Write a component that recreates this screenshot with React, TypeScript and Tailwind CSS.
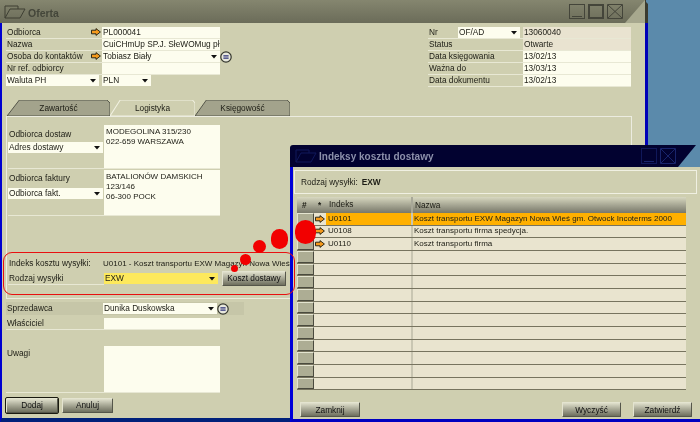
import React from "react";

const Arrow = () => (
  <svg width="10" height="8" viewBox="0 0 10 8" className="shrink-0">
    <path d="M0.5 2.2H5V0.6L9.4 4L5 7.4V5.8H0.5Z" fill="#f59a1c" stroke="#1a1a10" strokeWidth="0.9" />
  </svg>
);

const Caret = () => (
  <svg width="6" height="4" viewBox="0 0 6 4" className="shrink-0">
    <path d="M0 0H6L3 3.5Z" fill="#111" />
  </svg>
);

const Circle = () => (
  <svg width="12" height="12" viewBox="0 0 12 12" className="shrink-0">
    <circle cx="6" cy="6" r="5.2" fill="#e8e8dc" stroke="#33352c" strokeWidth="1.2" />
    <path d="M3.4 4.8H8.6M3.4 7.2H8.6" stroke="#2a2f78" strokeWidth="1.3" />
  </svg>
);

const Row = ({ label, children, icon }: { label: string; children?: React.ReactNode; icon?: boolean }) => (
  <div className="flex h-[12px] w-[214px] border-b border-[#e8e8d4]">
    <div className="relative flex w-[96px] shrink-0 items-center whitespace-nowrap pl-[1px] leading-none">
      {label}
      {icon && (
        <span className="absolute right-[1px] top-[1px]">
          <Arrow />
        </span>
      )}
    </div>
    {children}
  </div>
);

const Field = ({ children, className = "" }: { children?: React.ReactNode; className?: string }) => (
  <div className={`flex h-[11px] flex-1 items-center overflow-hidden whitespace-nowrap bg-[#fdfdee] pl-[1px] leading-none ${className}`}>
    {children}
  </div>
);

const Select = ({ text, className = "" }: { text: string; className?: string }) => (
  <div className={`flex h-[11px] items-center justify-between whitespace-nowrap bg-[#fdfdee] pl-[1px] pr-[3px] leading-none ${className}`}>
    <span>{text}</span>
    <Caret />
  </div>
);

const Btn = ({ text, className = "" }: { text: string; className?: string }) => (
  <div className={`flex h-[15px] items-center justify-center rounded-[1px] border border-[#55564a] border-t-[#e4e4d0] border-l-[#e4e4d0] bg-gradient-to-b from-[#e0e0cc] to-[#6e6f5e] leading-none text-[#111] ${className}`}>
    {text}
  </div>
);

const Tab = ({ text, active, className = "" }: { text: string; active?: boolean; className?: string }) => (
  <div className={`relative flex h-[16px] items-center justify-center leading-none ${className}`}>
    <svg className="absolute inset-0 h-full w-full" viewBox="0 0 100 16" preserveAspectRatio="none">
      <path
        d="M0 16L12 0H97L100 3V16Z"
        fill={active ? "#cfcfb0" : "#a3a38c"}
        stroke={active ? "#f2f2e2" : "#55564a"}
        strokeWidth="1"
        vectorEffect="non-scaling-stroke"
      />
    </svg>
    <span className="relative">{text}</span>
  </div>
);

const Folder = ({ color }: { color: string }) => (
  <svg width="22" height="14" viewBox="0 0 22 14" className="shrink-0">
    <path d="M1 1H14V4M1 1V13H16L21 4H6L1 13" fill="none" stroke={color} strokeWidth="1" />
  </svg>
);

const rows = [
  { id: "U0101", name: "Koszt transportu EXW Magazyn Nowa Wieś gm. Otwock Incoterms 2000" },
  { id: "U0108", name: "Koszt transportu firma spedycja." },
  { id: "U0110", name: "Koszt transportu firma" },
  ...Array.from({ length: 11 }, () => ({ id: "", name: "" })),
];

export default function App() {
  return (
    <div className="relative h-[422px] w-[700px] overflow-hidden bg-[#5b8aab] font-['Liberation_Sans',sans-serif] text-[8.3px] text-[#1c1c14] blur-[0.3px]">
      {/* main window */}
      <div className="absolute left-0 top-0 flex h-[422px] w-[648px] flex-col">
        <div className="relative flex h-[23px] shrink-0 items-center bg-gradient-to-b from-[#85866f] to-[#6b6c59] pl-[4px]">
          <Folder color="#3e3f33" />
          <span className="ml-[2px] mt-[3px] text-[10.5px] font-bold leading-none text-[#44463a]">Oferta</span>
          <div className="ml-auto mr-[25px] flex gap-[3px]">
            <div className="flex h-[15px] w-[16px] items-end justify-center border border-[#44453a] pb-[1px]">
              <div className="h-[1px] w-[10px] bg-[#44453a]" />
            </div>
            <div className="h-[15px] w-[16px] border-2 border-[#44453a]" />
            <svg width="16" height="15" viewBox="0 0 16 15">
              <path d="M.5.5H15.5V14.5H.5ZM1 1L15 14M15 1L1 14" fill="none" stroke="#44453a" />
            </svg>
          </div>
          <svg className="absolute right-0 top-0" width="23" height="23" viewBox="0 0 23 23">
            <path d="M0 23L20 0H23V23Z" fill="#a7a88e" />
            <path d="M20 0H23V23H20Z" fill="#3a3b30" />
            <path d="M21 0H23V4L21 2Z" fill="#5b8aab" />
          </svg>
        </div>
        <div className="flex-1 border-b-4 border-l-2 border-r-[3px] border-b-[#00207a] border-l-[#0000d0] border-r-[#0000b8] bg-[#cfcfb0] pt-[4px]">
          <div className="flex justify-between pl-[4px] pr-[14px]">
            <div className="w-[240px]">
              <Row label="Odbiorca" icon>
                <Field>PL000041</Field>
              </Row>
              <Row label="Nazwa">
                <Field>CuiCHmUp SP.J. SłeWOMug pł</Field>
              </Row>
              <div className="flex items-center">
                <Row label="Osoba do kontaktów" icon>
                  <Select text="Tobiasz Biały" className="flex-1" />
                </Row>
                <Circle />
              </div>
              <Row label="Nr ref. odbiorcy">
                <Field />
              </Row>
              <div className="flex gap-[3px]">
                <Select text="Waluta PH" className="w-[93px]" />
                <Select text="PLN" className="w-[49px]" />
              </div>
            </div>
            <div className="w-[203px]">
              <div className="flex h-[12px] border-b border-[#e8e8d4]">
                <div className="flex w-[30px] items-center pl-[1px] leading-none">Nr</div>
                <Select text="OF/AD" className="w-[62px]" />
                <Field className="ml-[3px] !bg-[#e9e3d0]">13060040</Field>
              </div>
              {[
                ["Status", "Otwarte", true],
                ["Data księgowania", "13/02/13", false],
                ["Ważna do", "13/03/13", false],
                ["Data dokumentu", "13/02/13", false],
              ].map(([l, v, ro]) => (
                <div key={String(l)} className="flex h-[12px] border-b border-[#e8e8d4]">
                  <div className="flex w-[95px] items-center pl-[1px] leading-none">{l}</div>
                  <Field className={ro ? "!bg-[#e9e3d0]" : ""}>{v}</Field>
                </div>
              ))}
            </div>
          </div>

          <div className="ml-[5px] mt-[13px] flex">
            <Tab text="Zawartość" className="w-[103px] bg-transparent" />
            <Tab text="Logistyka" active className="w-[85px]" />
            <Tab text="Księgowość" className="w-[95px]" />
          </div>

          <div className="ml-[4px] h-[183px] w-[626px] border border-[#ecece0] pl-[1px]">
            <div className="flex h-[52px] w-[212px] border-b border-[#e8e8d4] pt-[8px]">
              <div className="w-[96px] shrink-0">
                <div className="flex h-[13px] items-center pl-[1px] pt-[5px] leading-none">Odbiorca dostaw</div>
                <Select text="Adres dostawy" className="mr-[1px] mt-[4px]" />
              </div>
              <div className="h-[43px] flex-1 whitespace-pre-line bg-[#fdfdee] pl-[2px] pt-[2px] text-[8px] leading-[10px]">
                {"MODEGOLINA 315/230\n022-659 WARSZAWA"}
              </div>
            </div>
            <div className="flex h-[47px] w-[212px] border-b border-[#e8e8d4] pt-[1px]">
              <div className="w-[96px] shrink-0">
                <div className="mt-[2px] flex h-[13px] items-center pl-[1px] leading-none">Odbiorca faktury</div>
                <Select text="Odbiorca fakt." className="mr-[1px] mt-[3px]" />
              </div>
              <div className="h-[45px] flex-1 whitespace-pre-line bg-[#fdfdee] pl-[2px] pt-[2px] text-[8px] leading-[10px]">
                {"BATALIONÓW DAMSKICH\n123/146\n06-300 POCK"}
              </div>
            </div>
            <div className="mt-[42px] flex h-[11px] w-[280px] items-center whitespace-nowrap leading-none">
              <div className="w-[95px] shrink-0 pl-[1px]">Indeks kosztu wysyłki:</div>
              <div className="min-w-0 text-[8px]">U0101 - Koszt transportu EXW Magazyn Nowa Wieś</div>
            </div>
            <div className="mt-[3px] flex h-[13px] w-[281px] items-center">
              <div className="flex h-[13px] w-[96px] shrink-0 items-center border-b border-[#e8e8d4] pl-[1px] leading-none">
                Rodzaj wysyłki
              </div>
              <Select text="EXW" className="w-[114px] !bg-[#fde95c]" />
              <Btn text="Koszt dostawy" className="ml-[4px] w-[64px]" />
            </div>
          </div>

          <div className="ml-[4px] mt-[3px]">
            <div className="flex h-[13px] w-[238px] items-center bg-[#c6c6a8]">
              <div className="w-[97px] shrink-0 pl-[1px] leading-none">Sprzedawca</div>
              <Select text="Dunika Duskowska" className="w-[114px]" />
              <Circle />
            </div>
            <div className="mt-[3px] flex h-[12px] w-[214px] border-b border-[#e8e8d4]">
              <div className="flex w-[98px] shrink-0 items-center pl-[1px] leading-none">Właściciel</div>
              <Field />
            </div>
            <div className="mt-[16px] flex h-[47px] w-[214px] border-b border-[#e8e8d4]">
              <div className="w-[98px] shrink-0 pl-[1px] pt-[3px] leading-none">Uwagi</div>
              <div className="h-[46px] flex-1 bg-[#fdfdee]" />
            </div>
            <div className="mt-[5px] flex gap-[4px]">
              <Btn text="Dodaj" className="w-[52px] outline outline-1 outline-[#1a1a10]" />
              <Btn text="Anuluj" className="w-[51px]" />
            </div>
          </div>
        </div>
      </div>

      {/* dialog */}
      <div className="absolute left-[290px] top-[145px] flex h-[277px] w-[410px] flex-col">
        <div className="relative flex h-[22px] shrink-0 items-center rounded-tl-[3px] bg-[#020230] pl-[5px]">
          <Folder color="#10185a" />
          <span className="ml-[2px] mt-[2px] text-[10px] font-bold leading-none text-[#8c90aa]">Indeksy kosztu dostawy</span>
          <div className="ml-auto mr-[24px] flex gap-[3px]">
            <div className="flex h-[16px] w-[16px] items-end justify-center border border-[#10185a] pb-[1px]">
              <div className="h-[1px] w-[10px] bg-[#18246c]" />
            </div>
            <svg width="16" height="16" viewBox="0 0 16 16">
              <path d="M.5.5H15.5V15.5H.5ZM1 1L15 15M15 1L1 15" fill="none" stroke="#18246c" />
            </svg>
          </div>
          <svg className="absolute right-0 top-0" width="22" height="22" viewBox="0 0 22 22">
            <path d="M0 22L18 0H22V22Z" fill="#5b8aab" />
          </svg>
        </div>
        <div className="flex-1 border-b-[3px] border-l-[3px] border-b-[#0000c0] border-l-[#0000d8] bg-[#cfcfb0] pt-[3px]">
          <div className="ml-[1px] flex h-[24px] w-[403px] items-center border border-[#f0f0e2] pl-[6px] leading-none">
            Rodzaj wysyłki:<span className="ml-[4px] font-bold">EXW</span>
          </div>
          <div className="ml-[4px] mt-[3px] w-[389px]">
            <div className="flex h-[16px] items-center bg-gradient-to-b from-[#d8d8c0] to-[#78786a] leading-none">
              <div className="w-[18px] shrink-0 pl-[5px] font-bold">#</div>
              <div className="w-[11px] shrink-0 pl-[3px] font-bold">*</div>
              <div className="h-full w-[87px] shrink-0 border-r-2 border-[#a8a898] pl-[3px] pt-[3px]">Indeks</div>
              <div className="flex-1 pl-[2px]">Nazwa</div>
            </div>
            {rows.map((r, i) => (
              <div
                key={i}
                className={`flex h-[12.67px] items-stretch whitespace-nowrap border-b border-[#77745f] text-[8px] leading-none ${
                  i === 0 ? "bg-[#ffb000]" : "bg-[#e9e4cf]"
                }`}
              >
                <div className="w-[17px] shrink-0 border border-[#4a4a3e] border-l-[#e4e4d0] border-t-[#e4e4d0] bg-[#adad94]" />
                <div className="flex w-[12px] shrink-0 items-center justify-center bg-[#e9e4cf]">{r.id && <Arrow />}</div>
                <div className="flex w-[87px] shrink-0 items-center border-r-2 border-[#c9c6b2] pl-[2px]">{r.id}</div>
                <div className="flex flex-1 items-center pl-[1px]">{r.name}</div>
              </div>
            ))}
          </div>
          <div className="mt-[12px] flex w-[399px] pl-[7px]">
            <Btn text="Zamknij" className="w-[60px]" />
            <Btn text="Wyczyść" className="ml-auto w-[59px]" />
            <Btn text="Zatwierdź" className="ml-[12px] w-[59px]" />
          </div>
        </div>
      </div>

      {/* red annotation lying over the windows */}
      <div className="absolute left-[3px] top-[252px] h-[43px] w-[292px] rounded-[9px] border-[1.5px] border-[#e81010]" />
      <div className="absolute left-[271px] top-[229px] h-[20px] w-[17px] rounded-full bg-[#f20000]" />
      <div className="absolute left-[253px] top-[240px] h-[13px] w-[13px] rounded-full bg-[#f20000]" />
      <div className="absolute left-[240px] top-[254px] h-[11px] w-[11px] rounded-full bg-[#f20000]" />
      <div className="absolute left-[231px] top-[265px] h-[7px] w-[7px] rounded-full bg-[#f20000]" />
      <div className="absolute left-[295px] top-[220px] h-[24px] w-[21px] rounded-full bg-[#f20000]" />
    </div>
  );
}
